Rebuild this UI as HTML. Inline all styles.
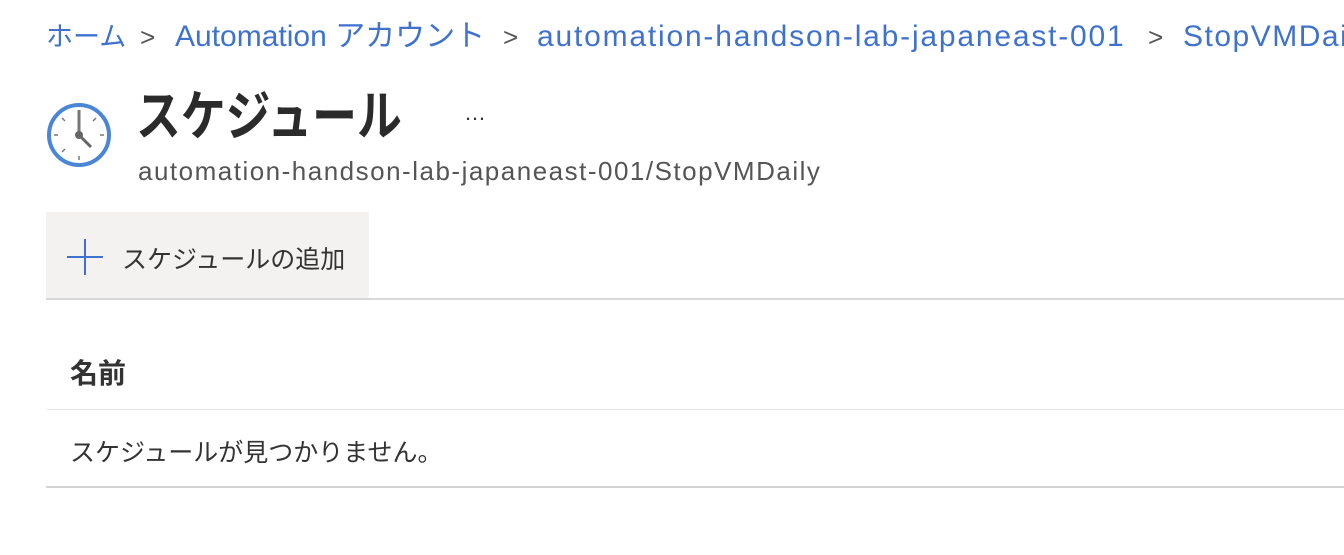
<!DOCTYPE html>
<html><head><meta charset="utf-8"><style>
body{margin:0;width:1344px;height:555px;background:#fff;overflow:hidden;font-family:"Liberation Sans","Noto Sans CJK JP",sans-serif;position:relative}
.a{position:absolute;white-space:nowrap}
.bc{top:17px;height:40px;line-height:40px;font-size:30px;color:#3f72cf}
.s{top:17px;height:40px;line-height:40px;font-size:26px;color:#555}
</style></head><body>
<div class="a bc" style="left:46px;font-size:27px">ホーム</div>
<div class="a s" style="left:140px">&gt;</div>
<div class="a bc" style="left:175px">Automation アカウント</div>
<div class="a s" style="left:503px">&gt;</div>
<div class="a bc" style="left:537px;letter-spacing:1.8px">automation-handson-lab-japaneast-001</div>
<div class="a s" style="left:1148px">&gt;</div>
<div class="a bc" style="left:1183px;letter-spacing:1.5px">StopVMDaily</div>
<svg class="a" style="left:46px;top:102px" width="66" height="66" viewBox="0 0 66 66">
<circle cx="33" cy="33" r="30" fill="#fff" stroke="#4a86d6" stroke-width="4"/>
<g stroke="#777" stroke-width="1.5">
<line x1="33" y1="8" x2="33" y2="12"/><line x1="33" y1="54" x2="33" y2="58"/>
<line x1="8" y1="33" x2="12" y2="33"/><line x1="54" y1="33" x2="58" y2="33"/>
<line x1="16" y1="16" x2="19" y2="19"/><line x1="50" y1="16" x2="47" y2="19"/>
<line x1="16" y1="50" x2="19" y2="47"/></g>
<line x1="33" y1="33" x2="33" y2="8" stroke="#777" stroke-width="3"/>
<line x1="33" y1="33" x2="45" y2="45" stroke="#666" stroke-width="3"/>
<circle cx="33" cy="33" r="4" fill="#666"/>
</svg>
<div class="a" style="left:136px;top:72px;font-size:54px;font-weight:bold;color:#2b2b2b;transform:scaleX(0.83);transform-origin:0 0">スケジュール</div>
<div class="a" style="left:464px;top:100px;font-size:22px;color:#333">…</div>
<div class="a" style="left:138px;top:156px;font-size:26px;color:#555;letter-spacing:1.5px">automation-handson-lab-japaneast-001/StopVMDaily</div>
<div class="a" style="left:46px;top:212px;width:323px;height:86px;background:#f3f2f1"></div>
<svg class="a" style="left:66px;top:238px" width="38" height="38"><line x1="19" y1="1" x2="19" y2="37" stroke="#3f72cf" stroke-width="2"/><line x1="1" y1="19" x2="37" y2="19" stroke="#3f72cf" stroke-width="2"/></svg>
<div class="a" style="left:122px;top:240px;font-size:25px;color:#333">スケジュールの追加</div>
<div class="a" style="left:46px;top:298px;width:1298px;height:2px;background:#d8d8d8"></div>
<div class="a" style="left:70px;top:352px;font-size:28px;font-weight:bold;color:#333">名前</div>
<div class="a" style="left:46px;top:409px;width:1298px;height:1px;background:#e6e6e6"></div>
<div class="a" style="left:70px;top:433px;font-size:25px;color:#333">スケジュールが見つかりません。</div>
<div class="a" style="left:46px;top:486px;width:1298px;height:2px;background:#d2d2d2"></div>
</body></html>
